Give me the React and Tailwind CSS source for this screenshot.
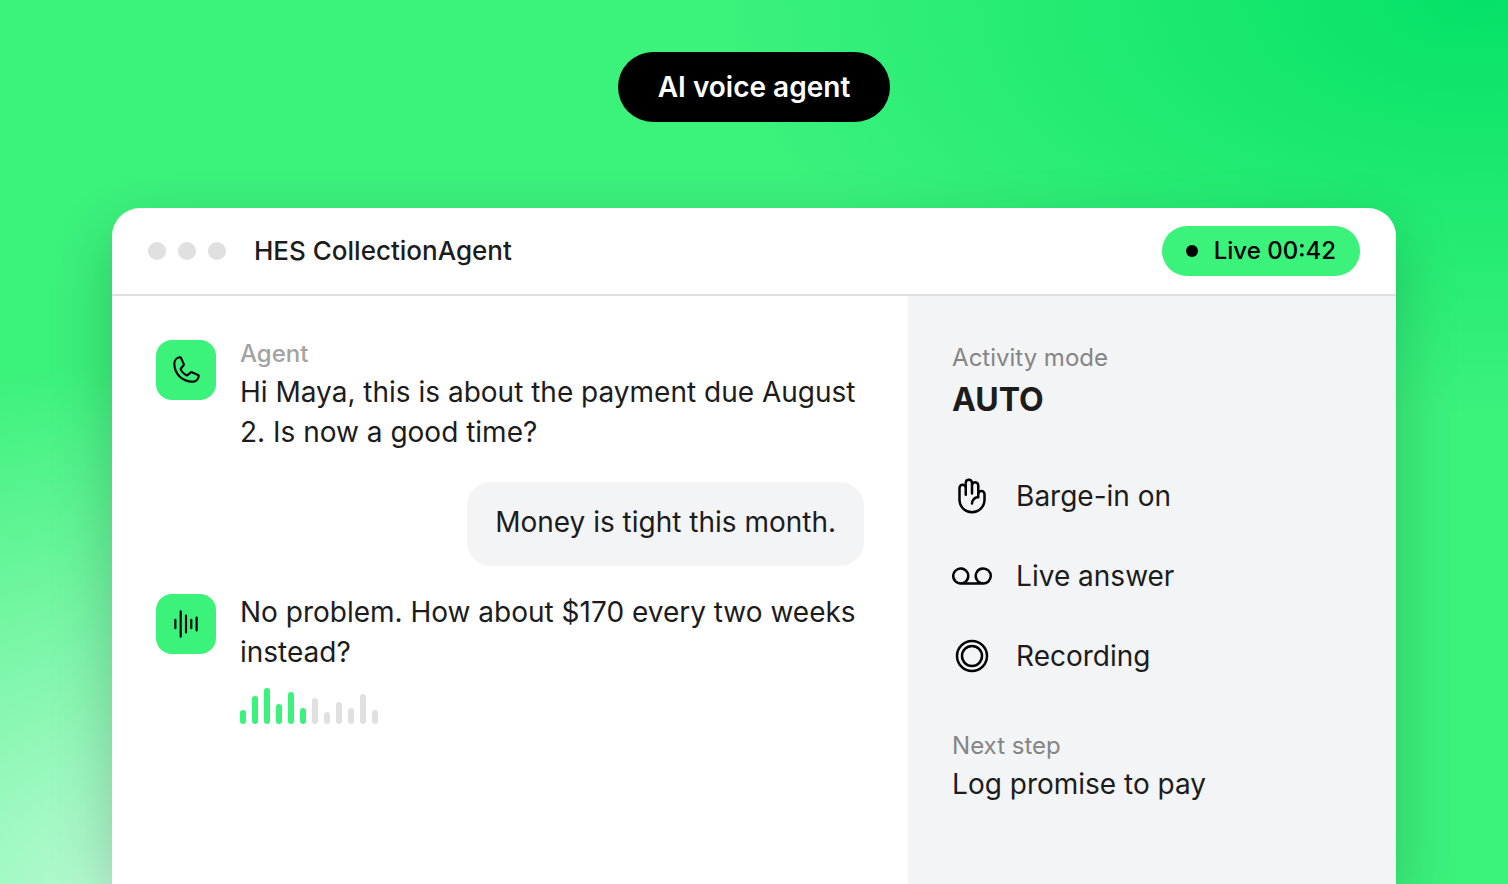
import {
  PiHandPalm,
  PiPhone,
  PiRecord,
  PiVoicemail,
  PiWaveform,
} from "react-icons/pi";

const levels = [
  { id: 1, height: "h-[14px]", played: true },
  { id: 2, height: "h-[28px]", played: true },
  { id: 3, height: "h-[36px]", played: true },
  { id: 4, height: "h-[20px]", played: true },
  { id: 5, height: "h-[32px]", played: true },
  { id: 6, height: "h-[16px]", played: true },
  { id: 7, height: "h-[26px]", played: false },
  { id: 8, height: "h-[12px]", played: false },
  { id: 9, height: "h-[22px]", played: false },
  { id: 10, height: "h-[16px]", played: false },
  { id: 11, height: "h-[30px]", played: false },
  { id: 12, height: "h-[14px]", played: false },
];

const features = [
  { label: "Barge-in on", Icon: PiHandPalm },
  { label: "Live answer", Icon: PiVoicemail },
  { label: "Recording", Icon: PiRecord },
];

function Avatar({ Icon }) {
  return (
    <div className="flex size-[60px] shrink-0 items-center justify-center rounded-2xl bg-[#3bf27b] text-black">
      <Icon size={34} aria-hidden="true" />
    </div>
  );
}

function TitleBar() {
  return (
    <header className="flex h-[88px] items-center border-b-2 border-[#e0e0e0] px-9">
      <div className="flex gap-3" aria-hidden="true">
        <span className="size-[18px] rounded-full bg-[#e0e0e0]" />
        <span className="size-[18px] rounded-full bg-[#e0e0e0]" />
        <span className="size-[18px] rounded-full bg-[#e0e0e0]" />
      </div>
      <h2 className="ml-7 text-[26px] leading-8 font-medium">
        HES CollectionAgent
      </h2>
      <div className="ml-auto flex h-[50px] items-center gap-4 rounded-full bg-[#3bf27b] px-6 text-2xl leading-8 font-medium text-black">
        <span className="size-3 rounded-full bg-black" />
        Live 00:42
      </div>
    </header>
  );
}

function Conversation() {
  return (
    <section className="flex flex-col p-11">
      <div className="flex gap-6">
        <Avatar Icon={PiPhone} />
        <div>
          <p className="text-2xl leading-7 font-medium text-[#a3a3a3]">Agent</p>
          <p className="mt-1 text-[28px] leading-10">
            Hi Maya, this is about the payment due August 2. Is now a good time?
          </p>
        </div>
      </div>
      <p className="mt-[30px] self-end rounded-3xl bg-[#f3f4f6] px-7 pt-5 pb-6 text-[28px] leading-10">
        Money is tight this month.
      </p>
      <div className="mt-7 flex gap-6">
        <Avatar Icon={PiWaveform} />
        <div className="-mt-0.5">
          <p className="text-[28px] leading-10">
            No problem. How about $170 every two weeks instead?
          </p>
          <div className="mt-4 flex h-9 items-end gap-1.5" aria-hidden="true">
            {levels.map((level) => (
              <span
                key={level.id}
                className={`w-1.5 rounded-full ${level.height} ${
                  level.played ? "bg-[#3bf27b]" : "bg-[#e0e0e0]"
                }`}
              />
            ))}
          </div>
        </div>
      </div>
    </section>
  );
}

function ActivityPanel() {
  return (
    <aside className="bg-[#f3f4f6] px-11 pt-11">
      <p className="text-2xl leading-9 text-[#858585]">Activity mode</p>
      <p className="text-[32px] leading-[48px] font-bold">AUTO</p>
      <ul className="mt-[52px] flex flex-col gap-10">
        {features.map(({ label, Icon }) => (
          <li
            key={label}
            className="flex items-center gap-6 text-[28px] leading-10"
          >
            <Icon size={40} className="text-black" aria-hidden="true" />
            {label}
          </li>
        ))}
      </ul>
      <p className="mt-[52px] text-2xl leading-9 text-[#858585]">Next step</p>
      <p className="text-[28px] leading-10">Log promise to pay</p>
    </aside>
  );
}

export default function App() {
  return (
    <main className="flex h-screen flex-col overflow-hidden bg-[#3bf27b] bg-[radial-gradient(ellipse_50%_47%_at_98%_0%,#05e267_0%,#05e26700_100%),radial-gradient(ellipse_44%_64%_at_10%_105%,#c4fbdb_0%,#c4fbdb00_100%)] px-28 pt-[52px] font-['Inter',sans-serif] text-[#1c1c1c]">
      <h1 className="flex h-[70px] items-center self-center rounded-full bg-black px-10 text-[28px] leading-10 font-semibold text-white">
        AI voice agent
      </h1>
      <div className="mt-[86px] flex grow flex-col overflow-hidden rounded-t-[28px] bg-white shadow-[0_24px_64px_#00000033]">
        <TitleBar />
        <div className="grid grow grid-cols-[62fr_38fr]">
          <Conversation />
          <ActivityPanel />
        </div>
      </div>
    </main>
  );
}
